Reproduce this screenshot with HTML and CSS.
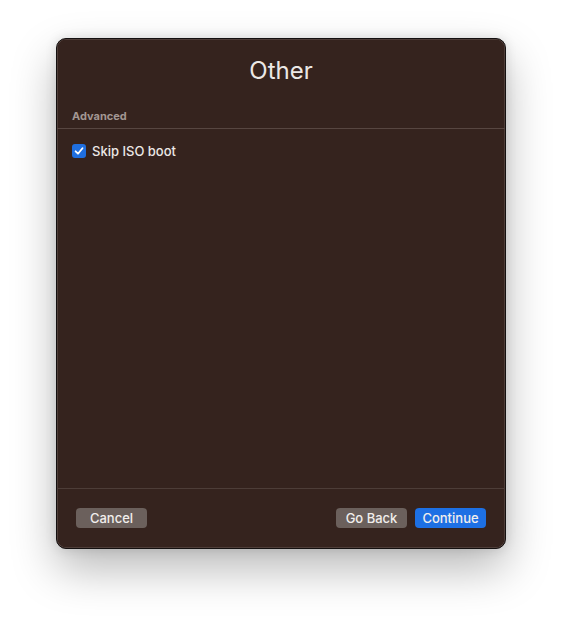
FILE: index.html
```html
<!DOCTYPE html>
<html>
<head>
    <title>Other</title>
    <link rel="stylesheet" href="styles.css">
</head>
<body>
    <div class="window">
        <h1 class="title">Other</h1>
        <!-- advanced section -->
        <div class="section-label">Advanced</div>
        <div class="content">
            <label class="check-row">
                <span class="checkbox">
                    <svg width="10" height="10" viewBox="0 0 10 10">
                        <path d="M1.6 5.3 L4 7.7 L8.5 2.2" fill="none" stroke="#fff" stroke-width="1.8" stroke-linecap="round" stroke-linejoin="round"/>
                    </svg>
                </span>
                Skip ISO boot
            </label>
        </div>
        <!-- footer buttons -->
        <div class="footer">
            <button class="btn gray">Cancel</button>
            <div class="spacer"></div>
            <button class="btn gray">Go Back</button>
            <button class="btn blue">Continue</button>
        </div>
    </div>
</body>
</html>
```

FILE: styles.css
```css
html, body {
    height: 100%;
}
body {
    margin: 0;
    background-color: #ffffff;
    font-family: Inter, "Liberation Sans", sans-serif;
    overflow: hidden;
}
.window {
    margin: 38px 0 0 56px;
    width: 450px;
    height: 511px;
    box-sizing: border-box;
    background-color: #35231e;
    border: 1px solid #141010;
    border-radius: 10px;
    box-shadow: 0 0 0 0.5px #6a5a55 inset, 0 20px 45px rgba(0, 0, 0, 0.28), 0 0 12px rgba(0, 0, 0, 0.12);
    display: flex;
    flex-direction: column;
    overflow: hidden;
}
.title {
    margin: 0;
    padding-top: 16px;
    height: 54px;
    text-align: center;
    font-size: 24px;
    font-weight: 400;
    color: #ece8e6;
    line-height: 32px;
}
.section-label {
    padding: 0 15px 5px;
    font-size: 11px;
    font-weight: 700;
    color: #a39793;
    line-height: 14px;
    border-bottom: 1px solid #574641;
}
.content {
    flex: 1;
    padding: 14px 15px;
    border-bottom: 1px solid #4d3d38;
}
.check-row {
    display: flex;
    align-items: center;
    gap: 6px;
    font-size: 13px;
    font-weight: 500;
    color: #ece8e6;
}
.checkbox {
    width: 14px;
    height: 14px;
    border-radius: 3px;
    background-color: #1f6fe0;
    display: flex;
    align-items: center;
    justify-content: center;
}
.footer {
    display: flex;
    align-items: center;
    gap: 8px;
    padding: 19px 19px 20px;
}
.spacer {
    flex: 1;
}
.btn {
    width: 71px;
    height: 20px;
    border: none;
    border-radius: 4px;
    font-family: Inter, "Liberation Sans", sans-serif;
    font-size: 13px;
    font-weight: 500;
    color: #f1eeec;
    padding: 0;
    cursor: pointer;
}
.gray {
    background-color: #6b605c;
}
.blue {
    background-color: #1d70e4;
}
```
